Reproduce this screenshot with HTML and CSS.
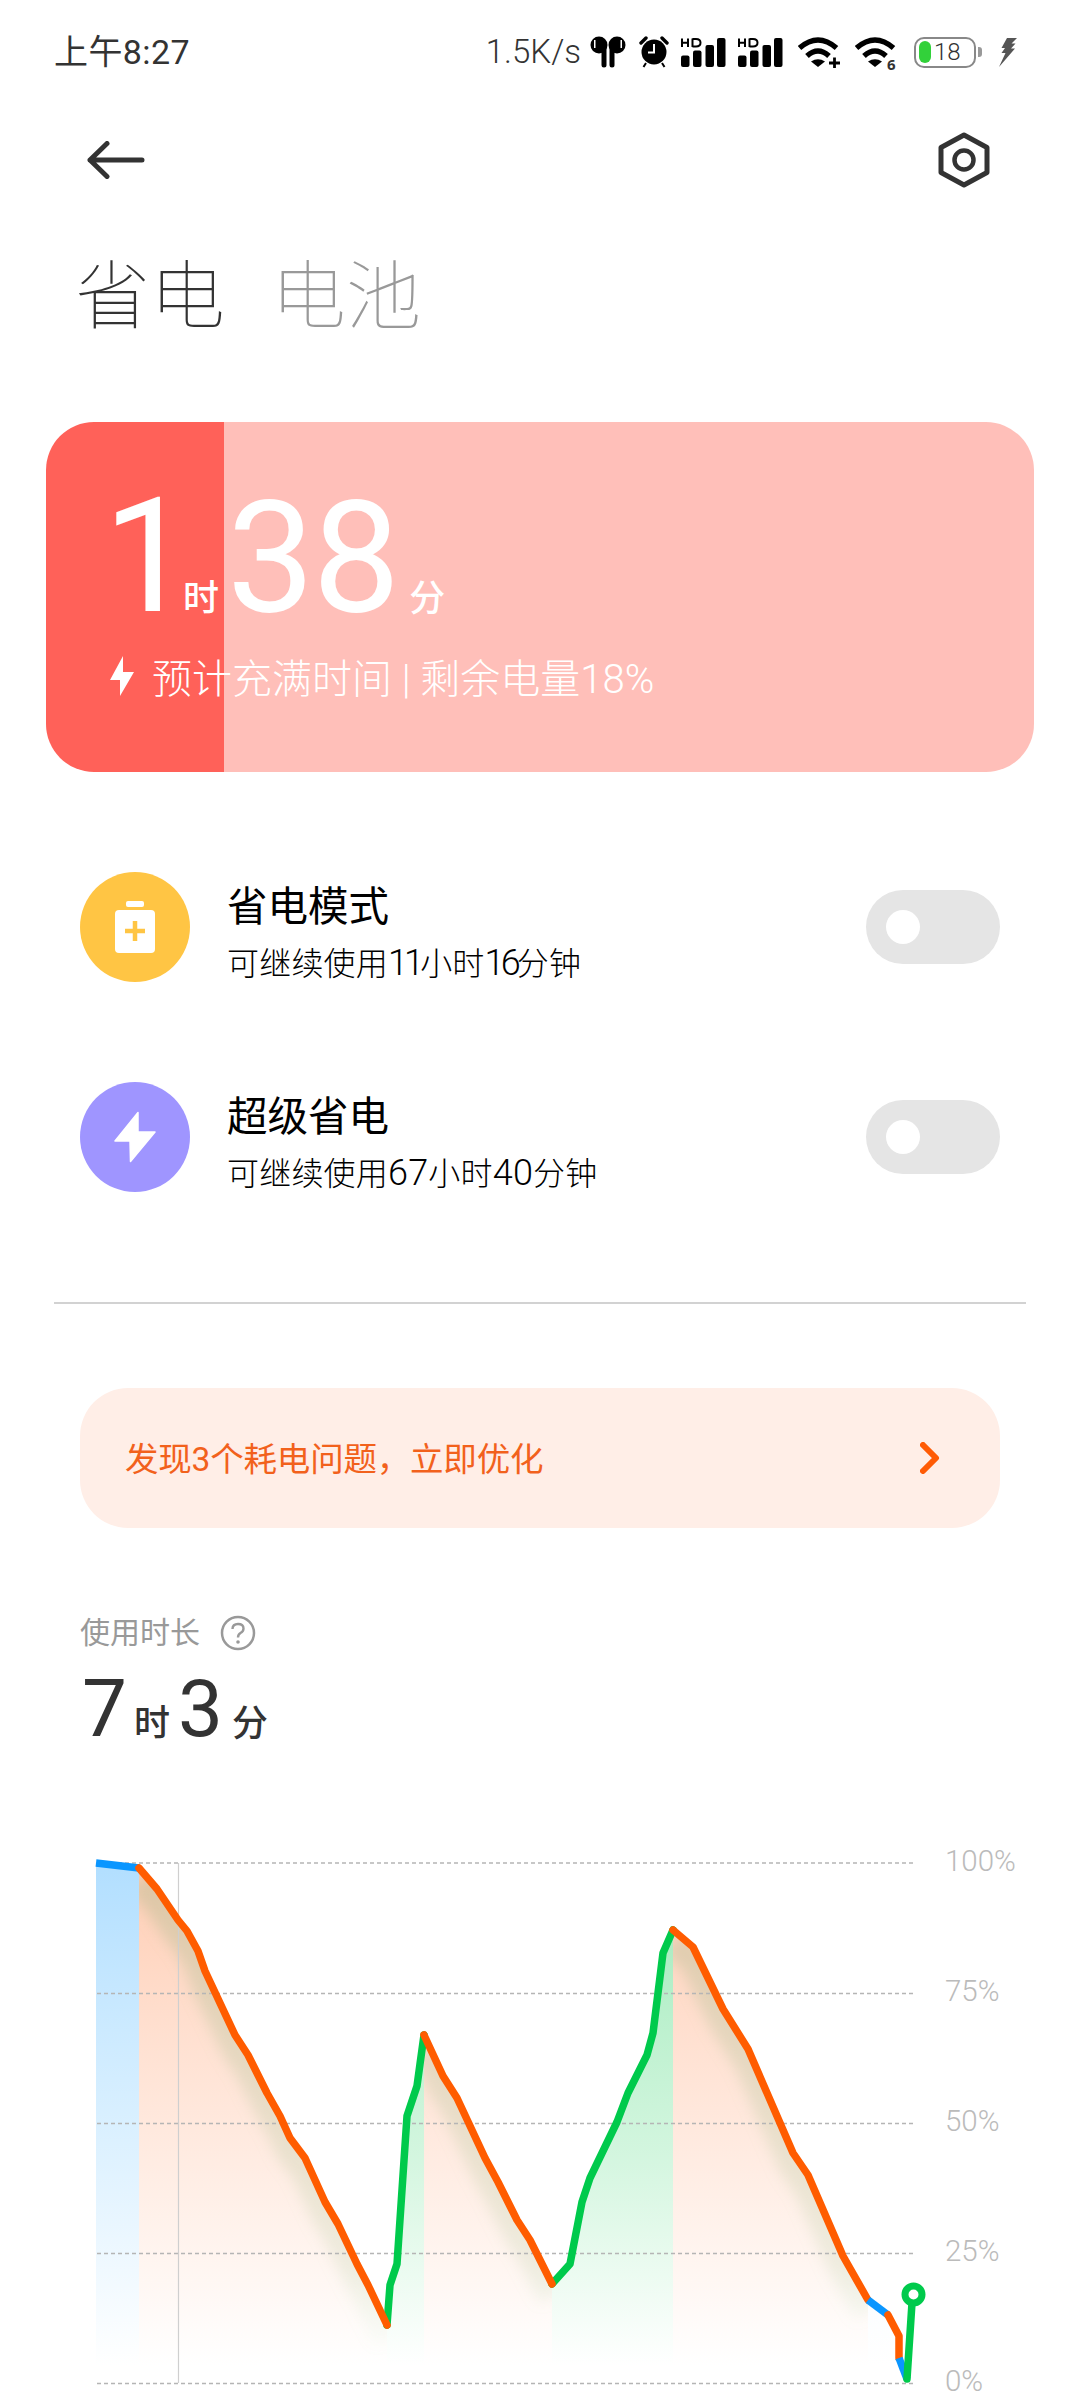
FILE: index.html
```html
<!DOCTYPE html>
<html lang="zh-CN">
<head>
<meta charset="utf-8">
<title>省电</title>
<link rel="stylesheet" href="styles.css">
</head>
<body>
<div class="page">
  <header class="status">
    <span class="clock">上午8:27</span>
    <div class="status-icons">
      <span class="speed">1.5K/s</span>
      <svg class="ic-buds" viewBox="0 0 36 32" width="36" height="32"><circle cx="9" cy="9" r="8.5"/><circle cx="27" cy="9" r="8.5"/><rect x="11.5" y="9" width="5" height="22.5" rx="2.5"/><rect x="19.5" y="9" width="5" height="22.5" rx="2.5"/><rect x="4" y="4" width="1.5" height="8" fill="#fff"/><rect x="30.5" y="4" width="1.5" height="8" fill="#fff"/></svg>
      <svg class="ic-alarm" viewBox="0 0 30 32" width="30" height="32"><circle cx="15" cy="16" r="12.5"/><path d="M2 7 L7 2 M23 2 L28 7" fill="none" stroke="#000" stroke-width="3.4" stroke-linecap="round"/><path d="M7 27 L4.5 31 M23 27 L25.5 31" fill="none" stroke="#000" stroke-width="2"/><path d="M15 8 V16.5 H9" fill="none" stroke="#fff" stroke-width="2"/></svg>
      <svg class="ic-signal" viewBox="0 0 45 29" width="45" height="29"><path d="M1 0.5 V9 M7 0.5 V9 M1 4.8 H7 M11.5 0.5 V9 M11.5 1 H15 Q19.5 1 19.5 4.8 Q19.5 8.5 15 8.5 H11.5" fill="none" stroke="#000" stroke-width="2"/><rect y="17.5" width="8.5" height="11.5" rx="2"/><rect x="12" y="12.5" width="8.5" height="16.5" rx="2"/><rect x="24.5" y="7" width="8.5" height="22" rx="2"/><rect x="36" width="8.5" height="29" rx="2"/></svg>
      <svg class="ic-signal" viewBox="0 0 45 29" width="45" height="29"><path d="M1 0.5 V9 M7 0.5 V9 M1 4.8 H7 M11.5 0.5 V9 M11.5 1 H15 Q19.5 1 19.5 4.8 Q19.5 8.5 15 8.5 H11.5" fill="none" stroke="#000" stroke-width="2"/><rect y="17.5" width="8.5" height="11.5" rx="2"/><rect x="12" y="12.5" width="8.5" height="16.5" rx="2"/><rect x="24.5" y="7" width="8.5" height="22" rx="2"/><rect x="36" width="8.5" height="29" rx="2"/></svg>
      <svg class="ic-wifi" viewBox="0 0 42 31" width="42" height="31"><path d="M1.5 11 Q20 -5 38.5 11 M9 19 Q20 9 31 19" fill="none" stroke="#000" stroke-width="5.4"/><path d="M13 24.5 Q20 20 27 24.5 L20 30 Z"/><path d="M31 26 H42 M36.5 20.5 V31" stroke="#000" stroke-width="2.8" fill="none"/></svg>
      <svg class="ic-wifi" viewBox="0 0 42 33" width="42" height="33"><path d="M1.5 11 Q20 -5 38.5 11 M9 19 Q20 9 31 19" fill="none" stroke="#000" stroke-width="5.4"/><path d="M13 24.5 Q20 20 27 24.5 L20 30 Z"/><text x="32" y="32.5" class="wifi-six">6</text></svg>
      <div class="battery"><span class="battery-fill"></span><span class="battery-num">18</span></div>
      <span class="battery-nub"></span>
      <svg class="ic-charge" viewBox="0 0 18 29" width="18" height="29"><path d="M8 0 H18 L12.5 5.5 H16.5 L12 10.5 H16 L0 29 L6.5 15 H2.5 L6 10 H2.5 Z"/></svg>
    </div>
  </header>

  <nav class="nav">
    <svg class="ic-back" viewBox="0 0 58 38" width="58" height="38"><path d="M20 2.5 L3 19 L20 35.5 M3 19 H55" fill="none" stroke="#333" stroke-width="5" stroke-linecap="round" stroke-linejoin="round"/></svg>
    <svg class="ic-gear" viewBox="0 0 52 56" width="52" height="56"><path d="M26 3 L49 15.5 V40.5 L26 53 L3 40.5 V15.5 Z" fill="none" stroke="#333" stroke-width="5" stroke-linejoin="round"/><circle cx="26" cy="28" r="9.5" fill="none" stroke="#333" stroke-width="4.5"/></svg>
  </nav>

  <div class="tabs">
    <span class="tab tab-on">省电</span>
    <span class="tab">电池</span>
  </div>

  <section class="card">
    <div class="card-time">
      <span class="big big-hour">1</span><span class="unit">时</span><span class="big big-min">38</span><span class="unit unit-min">分</span>
    </div>
    <div class="card-sub">
      <svg class="ic-bolt" viewBox="0 0 24 40" width="24" height="40"><path d="M13 0 L0 24 H10 V40 L24 16 H13 Z" fill="#fff"/></svg>
      <span class="card-sub-text">预计充满时间 | 剩余电量18%</span>
    </div>
  </section>

  <ul class="modes">
    <li class="mode">
      <span class="mode-icon mode-icon-yellow">
        <svg viewBox="0 0 42 52" width="42" height="52"><rect x="12" y="0" width="18" height="6" rx="2" fill="#fff"/><rect x="1" y="9" width="40" height="43" rx="4" fill="#fff"/><path d="M21 20 V40 M11 30 H31" stroke="#ffc544" stroke-width="4.5" fill="none"/></svg>
      </span>
      <div class="mode-text">
        <div class="mode-title">省电模式</div>
        <div class="mode-sub">可继续使用<span class="d d-one">11</span>小时<span class="d d-one">16</span>分钟</div>
      </div>
      <span class="toggle"><span class="knob"></span></span>
    </li>
    <li class="mode">
      <span class="mode-icon mode-icon-purple">
        <svg viewBox="0 0 42 52" width="42" height="52"><path d="M24 1.5 L1 30 H16 L16.5 50.5 L41 21 H24 Z" fill="#fff" stroke="#fff" stroke-width="1.5" stroke-linejoin="round"/></svg>
      </span>
      <div class="mode-text">
        <div class="mode-title">超级省电</div>
        <div class="mode-sub">可继续使用<span class="d">67</span>小时<span class="d">40</span>分钟</div>
      </div>
      <span class="toggle"><span class="knob"></span></span>
    </li>
  </ul>

  <hr class="divider">

  <a class="banner">
    <span class="banner-text">发现3个耗电问题，立即优化</span>
    <svg viewBox="0 0 20 32" width="20" height="32"><path d="M3 3 L16 16 L3 29" fill="none" stroke="#ff5b05" stroke-width="6" stroke-linecap="round" stroke-linejoin="round"/></svg>
  </a>

  <div class="usage-label">
    <span>使用时长</span>
    <svg viewBox="0 0 36 36" width="36" height="36"><circle cx="18" cy="18" r="16" fill="none" stroke="#999" stroke-width="2.5"/><path d="M12.5 14 Q12.5 9 18 9 Q23.5 9 23.5 13.5 Q23.5 16.5 20.5 18 Q18 19.5 18 22.5" fill="none" stroke="#999" stroke-width="2.4"/><circle cx="18" cy="27" r="1.8" fill="#999"/></svg>
  </div>
  <div class="usage-time">
    <span class="u-big u-big-hour">7</span><span class="u-unit">时</span><span class="u-big u-big-min">3</span><span class="u-unit u-unit-min">分</span>
  </div>

  <section class="chart">
    <svg class="chart-plot" viewBox="0 1840 930 560" width="930" height="560">
      <defs>
        <linearGradient id="gb" gradientUnits="userSpaceOnUse" x1="0" y1="1870" x2="0" y2="2365"><stop offset="0" stop-color="#8fd0ff" stop-opacity=".68"/><stop offset=".5" stop-color="#9ad6ff" stop-opacity=".38"/><stop offset="1" stop-color="#9ad6ff" stop-opacity="0"/></linearGradient>
        <linearGradient id="go" gradientUnits="userSpaceOnUse" x1="0" y1="1870" x2="0" y2="2365"><stop offset="0" stop-color="#ffc4a6" stop-opacity=".85"/><stop offset=".5" stop-color="#ffd5c0" stop-opacity=".55"/><stop offset="1" stop-color="#ffd5c0" stop-opacity="0"/></linearGradient>
        <linearGradient id="gg" gradientUnits="userSpaceOnUse" x1="0" y1="1930" x2="0" y2="2365"><stop offset="0" stop-color="#8de6ac" stop-opacity=".75"/><stop offset=".5" stop-color="#a5ecbd" stop-opacity=".5"/><stop offset="1" stop-color="#a5ecbd" stop-opacity="0"/></linearGradient>
        <linearGradient id="gs" gradientUnits="userSpaceOnUse" x1="0" y1="1870" x2="0" y2="2365"><stop offset="0" stop-color="#a9b98c" stop-opacity=".4"/><stop offset=".8" stop-color="#b5cba0" stop-opacity=".22"/><stop offset="1" stop-color="#a5ecbd" stop-opacity="0"/></linearGradient>
        <filter id="soft" x="-20%" y="-20%" width="140%" height="140%"><feGaussianBlur stdDeviation="7"/></filter>
        <clipPath id="co1"><polygon points="139,1867 157,1888 178,1919 187,1930 198,1950 205,1970 235,2034 248,2054 267,2092 280,2115 290,2137 305,2157 325,2201 338,2223 357,2263 368,2284 387,2324 387,2400 139,2400"/></clipPath>
        <clipPath id="co2"><polygon points="424,2034 443,2075 457,2097 485,2157 498,2181 517,2219 530,2239 552,2283 552,2400 424,2400"/></clipPath>
        <clipPath id="co3"><polygon points="673,1929 693,1946 723,2008 748,2048 793,2152 808,2174 843,2255 868,2299 868,2400 673,2400"/></clipPath>
      </defs>
      <polygon fill="url(#gb)" points="96,1862 139,1867 139,2400 96,2400"/>
      <polygon fill="url(#go)" points="139,1867 157,1888 178,1919 187,1930 198,1950 205,1970 235,2034 248,2054 267,2092 280,2115 290,2137 305,2157 325,2201 338,2223 357,2263 368,2284 387,2324 387,2400 139,2400"/>
      <polygon fill="url(#gg)" points="387,2324 390,2284 397,2263 407,2115 417,2085 420,2063 424,2034 424,2400 387,2400"/>
      <polygon fill="url(#go)" points="424,2034 443,2075 457,2097 485,2157 498,2181 517,2219 530,2239 552,2283 552,2400 424,2400"/>
      <polygon fill="url(#gg)" points="552,2283 570,2263 582,2201 590,2177 617,2121 628,2092 647,2054 653,2032 663,1952 673,1929 673,2400 552,2400"/>
      <polygon fill="url(#go)" points="673,1929 693,1946 723,2008 748,2048 793,2152 808,2174 843,2255 868,2299 868,2400 673,2400"/>
      <polygon fill="url(#gb)" points="868,2299 888,2314 899,2335 899,2357 907,2378 907,2400 868,2400" opacity=".4"/>
      <g clip-path="url(#co1)"><polyline class="shade" points="139,1880 157,1901 178,1932 187,1943 198,1963 205,1983 235,2047 248,2067 267,2105 280,2128 290,2150 305,2170 325,2214 338,2236 357,2276 368,2297 387,2340"/></g>
      <g clip-path="url(#co2)"><polyline class="shade" points="424,2047 443,2088 457,2110 485,2170 498,2194 517,2232 530,2252 552,2296"/></g>
      <g clip-path="url(#co3)"><polyline class="shade" points="673,1942 693,1959 723,2021 748,2061 793,2165 808,2187 843,2268 868,2312"/></g>
      <g class="grid">
        <line x1="97" y1="1862" x2="914" y2="1862"/>
        <line x1="97" y1="1992.5" x2="914" y2="1992.5"/>
        <line x1="97" y1="2122.5" x2="914" y2="2122.5"/>
        <line x1="97" y1="2252.5" x2="914" y2="2252.5"/>
        <line x1="97" y1="2382.5" x2="914" y2="2382.5"/>
      </g>
      <line class="now" x1="178.5" y1="1862" x2="178.5" y2="2382"/>
      <polyline class="ln ln-blue" points="96,1862 139,1867"/>
      <polyline class="ln ln-green" points="387,2324 390,2284 397,2263 407,2115 417,2085 420,2063 424,2034"/>
      <polyline class="ln ln-green" points="552,2283 570,2263 582,2201 590,2177 617,2121 628,2092 647,2054 653,2032 663,1952 673,1929"/>
      <polyline class="ln ln-orange" points="139,1867 157,1888 178,1919 187,1930 198,1950 205,1970 235,2034 248,2054 267,2092 280,2115 290,2137 305,2157 325,2201 338,2223 357,2263 368,2284 387,2324"/>
      <polyline class="ln ln-orange" points="424,2034 443,2075 457,2097 485,2157 498,2181 517,2219 530,2239 552,2283"/>
      <polyline class="ln ln-orange" points="673,1929 693,1946 723,2008 748,2048 793,2152 808,2174 843,2255 868,2299"/>
      <polyline class="ln ln-blue" points="868,2299 888,2314"/>
      <polyline class="ln ln-orange" points="888,2314 899,2335 899,2357"/>
      <polyline class="ln ln-blue" points="899,2357 907,2378"/>
      <polyline class="ln ln-green" points="907,2378 912,2302"/>
      <circle class="dot" cx="913.5" cy="2293.5" r="8.5"/>
    </svg>
    <div class="axis">
      <span>100%</span>
      <span>75%</span>
      <span>50%</span>
      <span>25%</span>
      <span>0%</span>
    </div>
  </section>
</div>
</body>
</html>
```
FILE: styles.css
```css
* { box-sizing: border-box; }
html, body { margin: 0; padding: 0; background: #fff; }
body { font-family: Roboto, "Noto Sans CJK SC", sans-serif; color: #333; }
.page { width: 1080px; height: 2400px; overflow: hidden; }
svg { display: block; flex: none; }

/* status bar */
.status { height: 104px; display: flex; align-items: center; padding: 0 63px 0 54px; }
.clock { font-size: 34px; letter-spacing: .4px; color: #333; line-height: 40px; }
.status-icons { margin-left: auto; display: flex; align-items: center; }
.speed { font-size: 33px; font-weight: 300; line-height: 40px; color: #333; margin-right: 8px; padding-right: 1px; white-space: nowrap; }
.ic-alarm { margin-left: 13px; }
.ic-signal { margin-left: 12px; }
.ic-wifi { margin-left: 15px; align-self: flex-start; margin-top: 5px; }
.wifi-six { font: 700 15px "Open Sans", sans-serif; fill: #333; }
.battery { width: 62px; height: 31px; margin-left: 17px; border: 2px solid #888; border-radius: 10px; display: flex; align-items: center; padding-left: 3px; }
.battery-fill { width: 12px; height: 22px; border-radius: 6px; background: #32d13a; }
.battery-num { font-size: 24px; font-weight: 300; color: #333; margin-left: 3px; line-height: 24px; }
.battery-nub { width: 4px; height: 10px; margin-left: 2px; background: #999; border-radius: 0 3px 3px 0; }
.ic-charge { margin-left: 17px; fill: #555; }

/* nav */
.nav { height: 112px; display: flex; align-items: center; justify-content: space-between; padding: 0 90px 0 87px; }

/* tabs */
.tabs { margin-top: 36px; padding-left: 75px; display: flex; gap: 46px; font-size: 75px; line-height: 90px; font-weight: 100; }
.tab { color: #999; }
.tab-on { color: #333; }

/* card */
.card { margin: 80px 46px 0; height: 350px; border-radius: 48px; padding: 55px 0 0 57px; color: #fff; background: linear-gradient(90deg, #ff6159 18%, #ffbfb9 18%); }
.card-time { display: flex; align-items: baseline; height: 160px; line-height: 160px; }
.big { font-size: 160px; }
.big-hour { letter-spacing: -10px; }
.big-min { font-size: 156px; margin-left: 8px; letter-spacing: -2px; }
.unit { font-size: 36px; line-height: 36px; font-weight: 500; }
.unit-min { margin-left: 11px; }
.card-sub { margin-top: 19px; display: flex; align-items: center; height: 40px; padding-left: 7px; gap: 18px; font-size: 40px; font-weight: 300; line-height: 40px; white-space: nowrap; }
.card-sub-text { padding-top: 7px; }

/* modes */
.modes { list-style: none; margin: 50px 0 0; padding: 0 80px; }
.mode { height: 210px; display: flex; align-items: center; }
.mode-icon { width: 110px; height: 110px; border-radius: 50%; display: flex; align-items: center; justify-content: center; }
.mode-icon-yellow { background: #ffc544; }
.mode-icon-purple { background: #9f95ff; }
.mode-text { margin-left: 37px; padding-top: 12px; }
.mode-title { font-size: 40.5px; line-height: 52px; color: #000; }
.mode-sub { font-size: 32px; line-height: 44px; margin-top: 9px; color: #000; font-weight: 300; letter-spacing: .2px; }
.d { font-size: 36px; line-height: 36px; }
.d-one { letter-spacing: -3.9px; }
.toggle { margin-left: auto; width: 134px; height: 74px; border-radius: 37px; background: #e5e5e5; display: flex; align-items: center; padding-left: 20px; }
.knob { width: 34px; height: 34px; border-radius: 50%; background: #fff; }

.divider { margin: 60px 54px 0; height: 2px; border: 0; background: #d2d2d2; }

/* banner */
.banner { margin: 84px 80px 0; height: 140px; border-radius: 48px; background: #ffeee7; display: flex; align-items: center; justify-content: space-between; padding: 0 60px 0 45px; font-size: 33.5px; color: #f2611c; }
.banner-text { letter-spacing: -.2px; padding-bottom: 4px; }

/* usage */
.usage-label { margin: 85px 0 0 80px; height: 40px; display: flex; align-items: center; gap: 20px; font-size: 30px; line-height: 40px; color: #999; }
.usage-time { margin: 16px 0 0 80px; display: flex; align-items: baseline; height: 80px; line-height: 80px; color: #333; }
.u-big { font-size: 80px; }
.u-big-hour { margin-left: 2px; }
.u-big-min { margin-left: 8px; }
.u-unit { font-size: 36px; line-height: 36px; margin-left: 7px; font-weight: 500; }
.u-unit-min { margin-left: 9px; }

/* chart */
.chart { margin-top: 92px; display: flex; }
.axis { margin-left: 15px; display: grid; grid-auto-rows: 130px; font-size: 29.5px; font-weight: 300; line-height: 40px; color: #bbb; }
.grid line { stroke: #b5b5b5; stroke-width: 1.5; stroke-dasharray: 4 3; }
.now { stroke: #cfcfcf; stroke-width: 1.2; }
.ln { fill: none; stroke-width: 7.5; stroke-linejoin: round; stroke-linecap: round; }
.ln-blue { stroke: #0a96ff; stroke-linecap: butt; }
.ln-orange { stroke: #ff5c00; }
.ln-green { stroke: #00ca4c; }
.shade { fill: none; stroke: url(#gs); stroke-width: 28; filter: url(#soft); }
.dot { fill: #fff; stroke: #00ca4c; stroke-width: 7; }
```
